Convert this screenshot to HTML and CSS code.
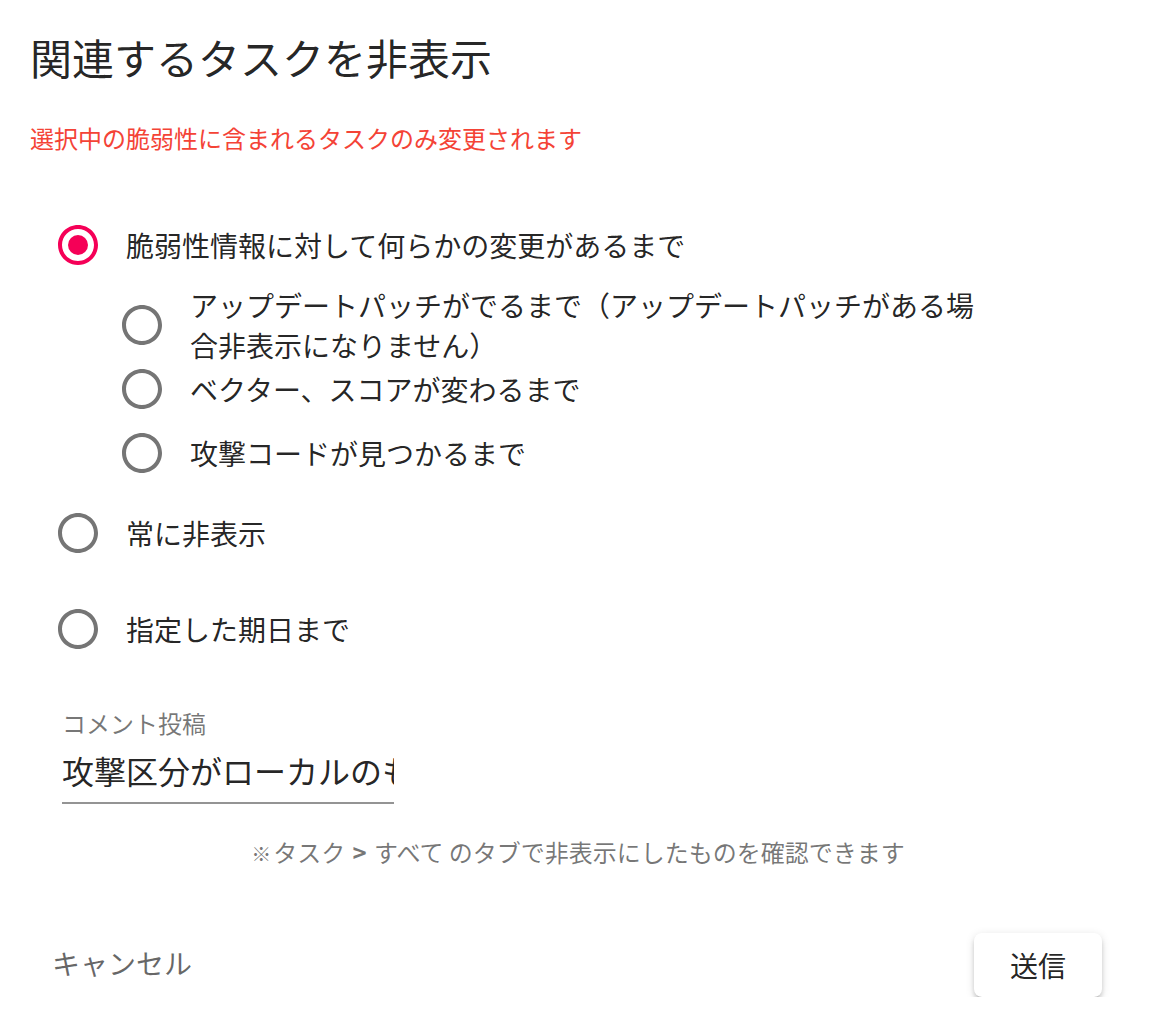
FILE: index.html
```html
<!DOCTYPE html>
<html lang="ja">
<head>
<meta charset="utf-8">
<title>関連するタスクを非表示</title>
<link rel="stylesheet" href="styles.css">
</head>
<body>
<div class="dialog">
  <h1 class="title">関連するタスクを非表示</h1>
  <p class="warning">選択中の脆弱性に含まれるタスクのみ変更されます</p>

  <div class="options">
    <div class="row main-row">
      <svg class="radio checked" viewBox="0 0 24 24" width="48" height="48"><path d="M12 2C6.48 2 2 6.48 2 12s4.48 10 10 10 10-4.48 10-10S17.520 2 12 2zm0 18c-4.42 0-8-3.58-8-8s3.58-8 8-8 8 3.58 8 8-3.58 8-8 8z"/><circle cx="12" cy="12" r="5"/></svg>
      <span class="label">脆弱性情報に対して何らかの変更があるまで</span>
    </div>
    <div class="sub-list">
      <div class="row sub-row">
        <svg class="radio" viewBox="0 0 24 24" width="48" height="48"><path d="M12 2C6.48 2 2 6.48 2 12s4.48 10 10 10 10-4.48 10-10S17.52 2 12 2zm0 18c-4.42 0-8-3.58-8-8s3.58-8 8-8 8 3.58 8 8-3.58 8-8 8z"/></svg>
        <span class="label sub-label">アップデートパッチがでるまで（アップデートパッチがある場合非表示になりません）</span>
      </div>
      <div class="row sub-row">
        <svg class="radio" viewBox="0 0 24 24" width="48" height="48"><path d="M12 2C6.48 2 2 6.48 2 12s4.48 10 10 10 10-4.48 10-10S17.52 2 12 2zm0 18c-4.42 0-8-3.58-8-8s3.58-8 8-8 8 3.58 8 8-3.58 8-8 8z"/></svg>
        <span class="label">ベクター、スコアが変わるまで</span>
      </div>
      <div class="row sub-row">
        <svg class="radio" viewBox="0 0 24 24" width="48" height="48"><path d="M12 2C6.48 2 2 6.48 2 12s4.48 10 10 10 10-4.48 10-10S17.52 2 12 2zm0 18c-4.42 0-8-3.58-8-8s3.58-8 8-8 8 3.58 8 8-3.58 8-8 8z"/></svg>
        <span class="label">攻撃コードが見つかるまで</span>
      </div>
    </div>
    <div class="row main-row">
      <svg class="radio" viewBox="0 0 24 24" width="48" height="48"><path d="M12 2C6.48 2 2 6.48 2 12s4.48 10 10 10 10-4.48 10-10S17.52 2 12 2zm0 18c-4.42 0-8-3.58-8-8s3.58-8 8-8 8 3.58 8 8-3.58 8-8 8z"/></svg>
      <span class="label">常に非表示</span>
    </div>
    <div class="row main-row">
      <svg class="radio" viewBox="0 0 24 24" width="48" height="48"><path d="M12 2C6.48 2 2 6.48 2 12s4.48 10 10 10 10-4.48 10-10S17.52 2 12 2zm0 18c-4.42 0-8-3.58-8-8s3.58-8 8-8 8 3.58 8 8-3.58 8-8 8z"/></svg>
      <span class="label">指定した期日まで</span>
    </div>
  </div>

  <div class="field">
    <label class="field-label" for="comment">コメント投稿</label>
    <input class="field-input" id="comment" type="text" value="攻撃区分がローカルのものは対応不要">
  </div>

  <p class="hint"><span class="mark">※</span>タスク <span class="gt">&gt;</span> すべて のタブで非表示にしたものを確認できます</p>

  <div class="actions">
    <button class="cancel" type="button">キャンセル</button>
    <button class="submit" type="button">送信</button>
  </div>
</div>
</body>
</html>
```

FILE: styles.css
```css
* {
  box-sizing: border-box;
}

body {
  margin: 0;
  background: #ffffff;
  font-family: "Noto Sans CJK JP", "Noto Sans", sans-serif;
  color: rgba(0, 0, 0, 0.87);
}

.dialog {
  width: 1156px;
  padding-top: 25px;
}

.title {
  margin: 0 0 0 30px;
  font-size: 42px;
  line-height: 64px;
  font-weight: 400;
  color: rgba(0, 0, 0, 0.87);
}

.warning {
  margin: 31px 0 0 30px;
  font-size: 24px;
  line-height: 36px;
  color: #f44336;
}

.options {
  margin: 41px 0 0 54px;
}

.row {
  display: flex;
  align-items: center;
  gap: 24px;
}

.main-row {
  height: 96px;
}

.sub-list {
  padding-left: 64px;
}

.sub-row {
  height: 64px;
}

.radio {
  flex: none;
  fill: #757575;
}

.radio.checked {
  fill: #f50057;
}

.label {
  font-size: 28px;
  line-height: 40px;
  color: rgba(0, 0, 0, 0.87);
}

.sub-label {
  width: 800px;
}

.field {
  margin: 28px 0 0 62px;
  width: 332px;
}

.field-label {
  display: block;
  font-size: 24px;
  line-height: 36px;
  color: rgba(0, 0, 0, 0.54);
}

.field-input {
  display: block;
  width: 100%;
  margin: 5px 0 0 0;
  padding: 0 0 8px 0;
  border: none;
  border-bottom: 2px solid rgba(0, 0, 0, 0.42);
  outline: none;
  background: transparent;
  font-family: inherit;
  font-size: 32px;
  line-height: 48px;
  height: 58px;
  color: rgba(0, 0, 0, 0.87);
}

.hint {
  margin: 30px 0 0 0;
  text-align: center;
  font-size: 24px;
  line-height: 36px;
  color: rgba(0, 0, 0, 0.54);
}

.mark {
  font-size: 20px;
  margin-right: 2px;
}

.gt {
  display: inline-block;
  margin: 0 2px;
  font-weight: 700;
}

.actions {
  margin-top: 61px;
  display: flex;
  justify-content: space-between;
  align-items: center;
  padding: 0 54px 0 52px;
}

.cancel {
  border: none;
  background: none;
  padding: 0 0 5px 0;
  font-family: inherit;
  font-size: 28px;
  line-height: 40px;
  color: rgba(0, 0, 0, 0.6);
}

.submit {
  width: 128px;
  height: 64px;
  border: none;
  border-radius: 8px;
  background: #ffffff;
  font-family: inherit;
  font-size: 28px;
  color: rgba(0, 0, 0, 0.87);
  box-shadow: 0 6px 2px -4px rgba(0, 0, 0, 0.2), 0 4px 4px 0 rgba(0, 0, 0, 0.14), 0 2px 10px 0 rgba(0, 0, 0, 0.12);
}
```
